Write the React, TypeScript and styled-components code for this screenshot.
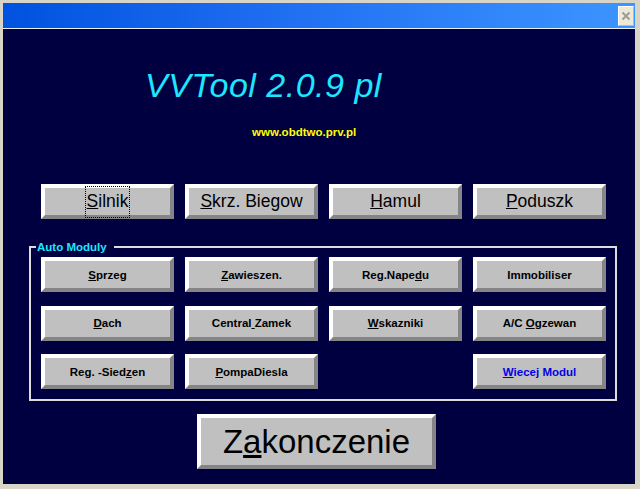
import React from "react";
import styled, { createGlobalStyle } from "styled-components";

const GlobalStyle = createGlobalStyle`
  html, body {
    margin: 0;
    padding: 0;
    background: #d4d0c8;
  }
  body {
    font-family: "Liberation Sans", Arial, sans-serif;
  }
`;

interface Item {
  text: string;
  at: number; // index of the accelerator letter, -1 for none
  color?: string;
  col?: number;
}

const mainButtons: Item[] = [
  { text: "Silnik", at: 0 },
  { text: "Skrz. Biegow", at: 0 },
  { text: "Hamul", at: 0 },
  { text: "Poduszk", at: 0 },
];

const moduleButtons: Item[] = [
  { text: "Sprzeg", at: 0 },
  { text: "Zawieszen.", at: 0 },
  { text: "Reg.Napedu", at: 8 },
  { text: "Immobiliser", at: -1 },
  { text: "Dach", at: 0 },
  { text: "Central Zamek", at: 7 },
  { text: "Wskazniki", at: 0 },
  { text: "A/C Ogzewan", at: 4 },
  { text: "Reg. -Siedzen", at: 10 },
  { text: "PompaDiesla", at: 0 },
  { text: "Wiecej Modul", at: 0, color: "#0000e8", col: 4 },
];

const Label = ({ text, at }: { text: string; at: number }) => {
  if (at < 0) return <>{text}</>;
  return (
    <>
      {text.slice(0, at)}
      <u>{text[at]}</u>
      {text.slice(at + 1)}
    </>
  );
};

const App = () => {
  return (
    <>
      <GlobalStyle />
      <Window>
        <TitleBar>
          <CloseButton aria-label="close">
            <svg width="10" height="10" viewBox="0 0 10 10">
              <path d="M1.5 1.5 L8.5 8.5 M8.5 1.5 L1.5 8.5" stroke="#a09c94" strokeWidth="2" />
            </svg>
          </CloseButton>
        </TitleBar>
        <Client>
          <Heading>VVTool 2.0.9 pl</Heading>
          <Url>www.obdtwo.prv.pl</Url>

          <MainRow>
            {mainButtons.map((b, i) => (
              <Bevel key={b.text} $w={133} $h={35} $fs={17.5}>
                {i === 0 ? (
                  <Focus>
                    <Label text={b.text} at={b.at} />
                  </Focus>
                ) : (
                  <Label text={b.text} at={b.at} />
                )}
              </Bevel>
            ))}
          </MainRow>

          <Group>
            <Legend>Auto Moduly</Legend>
            <ModuleGrid>
              {moduleButtons.map((b) => (
                <Bevel
                  key={b.text}
                  $w={133}
                  $h={35}
                  $fs={11.5}
                  $bold
                  $color={b.color}
                  $col={b.col}
                >
                  <Label text={b.text} at={b.at} />
                </Bevel>
              ))}
            </ModuleGrid>
          </Group>

          <ExitRow>
            <Bevel $w={239} $h={55} $fs={33}>
              <Label text="Zakonczenie" at={1} />
            </Bevel>
          </ExitRow>
        </Client>
      </Window>
    </>
  );
};

export default App;

const Window = styled.div`
  width: 640px;
  height: 489px;
  box-sizing: border-box;
  padding: 3px 5px 5px 3px;
  background: #d8d4c8;
  display: flex;
  flex-direction: column;
  overflow: hidden;
`;

const TitleBar = styled.div`
  height: 26px;
  flex-shrink: 0;
  background: linear-gradient(to right, #0052df 0%, #1d6cf0 40%, #3d95ff 100%);
  display: flex;
  align-items: flex-start;
  justify-content: flex-end;
  padding: 3px 1px 0 0;
  box-sizing: border-box;
  border-bottom: 1px solid #e8eefc;
`;

const CloseButton = styled.button`
  width: 16px;
  height: 20px;
  padding: 0;
  margin: 0;
  border: 1px solid #ffffff;
  border-right-color: #bdb8ac;
  border-bottom-color: #bdb8ac;
  background: #ece9d8;
  display: flex;
  align-items: center;
  justify-content: center;
`;

const Client = styled.div`
  flex: 1;
  background: #000040;
  display: flex;
  flex-direction: column;
  align-items: flex-start;
`;

const Heading = styled.div`
  margin: 36px 0 0 142px;
  font-size: 34px;
  line-height: 40px;
  font-style: italic;
  color: #1ee6ff;
  letter-spacing: 0.5px;
`;

const Url = styled.div`
  margin: 20px 0 0 249px;
  font-size: 11.5px;
  line-height: 14px;
  font-weight: bold;
  color: #ffff00;
`;

const MainRow = styled.div`
  display: flex;
  gap: 11px;
  margin: 45px 0 0 38px;
`;

const Bevel = styled.button<{
  $w: number;
  $h: number;
  $fs: number;
  $bold?: boolean;
  $color?: string;
  $col?: number;
}>`
  width: ${(p) => p.$w}px;
  height: ${(p) => p.$h}px;
  box-sizing: border-box;
  margin: 0;
  padding: 0;
  border: 4px solid;
  border-color: #ffffff #858585 #858585 #ffffff;
  background: #c0c0c0;
  color: ${(p) => p.$color || "#000000"};
  font-family: "Liberation Sans", Arial, sans-serif;
  font-size: ${(p) => p.$fs}px;
  font-weight: ${(p) => (p.$bold ? "bold" : "normal")};
  display: flex;
  align-items: center;
  justify-content: center;
  white-space: pre;
  grid-column: ${(p) => (p.$col ? p.$col : "auto")};
`;

const Focus = styled.span`
  border: 1px dotted #000000;
  padding: 4px 1px 5px 1px;
`;

const Group = styled.fieldset`
  margin: 21px 0 0 26px;
  width: 588px;
  box-sizing: border-box;
  padding: 3px 8px 10px 10px;
  border: 2px solid #dcdcdc;
  min-inline-size: 0;
`;

const Legend = styled.legend`
  margin-left: -5px;
  padding: 0 7px 0 1px;
  font-size: 11.5px;
  line-height: 14px;
  font-weight: bold;
  color: #1ee6ff;
`;

const ModuleGrid = styled.div`
  display: grid;
  grid-template-columns: repeat(4, 133px);
  grid-auto-rows: 35px;
  column-gap: 11px;
  row-gap: 13.5px;
`;

const ExitRow = styled.div`
  margin: 13px 0 0 194px;
`;
